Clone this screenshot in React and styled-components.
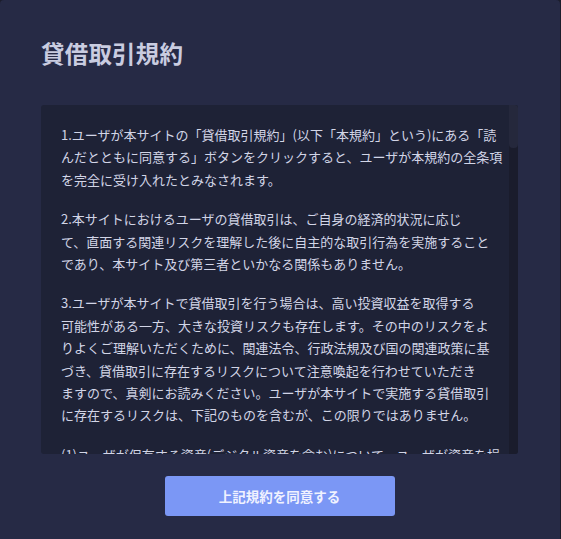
import React from "react";
import styled, { createGlobalStyle } from "styled-components";

const Global = createGlobalStyle`
  html, body { margin: 0; padding: 0; background: #1b1d2b; }
  body { font-family: "Noto Sans CJK JP", "Noto Sans", sans-serif; }
  #root { width: 561px; height: 539px; }
`;

const Dialog = styled.div`
  box-sizing: border-box;
  width: 560px;
  height: 539px;
  background: #262a45;
  border-radius: 4px 4px 0 0;
  padding: 36px 42px 0 41px;
  display: flex;
  flex-direction: column;
`;

const Title = styled.h2`
  margin: 0 0 35px;
  font-size: 23.5px;
  line-height: 34px;
  font-weight: 700;
  color: #c9cce0;
  letter-spacing: 0.2px;
`;

const Box = styled.div`
  display: flex;
  height: 349px;
  background: #1e2236;
  border-radius: 3px;
  overflow: hidden;
`;

const TextArea = styled.div`
  flex: 1;
  overflow: hidden;
  padding: 19px 12px 0 20px;
  color: #d2d5e6;
  font-size: 13px;
  line-height: 22.4px;
`;

const Para = styled.p`
  margin: 0 0 17px;
`;

const Line = styled.span`
  display: block;
  white-space: nowrap;
`;

const Track = styled.div`
  width: 9px;
  flex: none;
  background: #1a1c2c;
`;

const Thumb = styled.div`
  height: 43px;
  background: #25283c;
  border-radius: 0 0 4px 4px;
`;

const Footer = styled.div`
  display: flex;
  justify-content: center;
  padding: 22px 0 0;
`;

const Button = styled.button`
  width: 230px;
  height: 40px;
  border: none;
  border-radius: 3px;
  background: #7b97f5;
  color: #f0f2ff;
  font-family: "Noto Sans CJK JP", "Noto Sans", sans-serif;
  font-size: 13.5px;
  font-weight: 700;
  cursor: pointer;
`;

const paragraphs = [
  [
    "1.ユーザが本サイトの「貸借取引規約」(以下「本規約」という)にある「読",
    "んだとともに同意する」ボタンをクリックすると、ユーザが本規約の全条項",
    "を完全に受け入れたとみなされます。",
  ],
  [
    "2.本サイトにおけるユーザの貸借取引は、ご自身の経済的状況に応じ",
    "て、直面する関連リスクを理解した後に自主的な取引行為を実施すること",
    "であり、本サイト及び第三者といかなる関係もありません。",
  ],
  [
    "3.ユーザが本サイトで貸借取引を行う場合は、高い投資収益を取得する",
    "可能性がある一方、大きな投資リスクも存在します。その中のリスクをよ",
    "りよくご理解いただくために、関連法令、行政法規及び国の関連政策に基",
    "づき、貸借取引に存在するリスクについて注意喚起を行わせていただき",
    "ますので、真剣にお読みください。ユーザが本サイトで実施する貸借取引",
    "に存在するリスクは、下記のものを含むが、この限りではありません。",
  ],
  [
    "(1)ユーザが保有する資産(デジタル資産を含む)について、ユーザが資産を損",
    "失する可能性があります。",
  ],
];

export default function App() {
  return (
    <>
      <Global />
      <Dialog>
        <Title>貸借取引規約</Title>
        <Box>
          <TextArea>
            {paragraphs.map((lines, i) => (
              <Para key={i}>
                {lines.map((l, j) => (
                  <Line key={j}>{l}</Line>
                ))}
              </Para>
            ))}
          </TextArea>
          <Track>
            <Thumb />
          </Track>
        </Box>
        <Footer>
          <Button>上記規約を同意する</Button>
        </Footer>
      </Dialog>
    </>
  );
}
